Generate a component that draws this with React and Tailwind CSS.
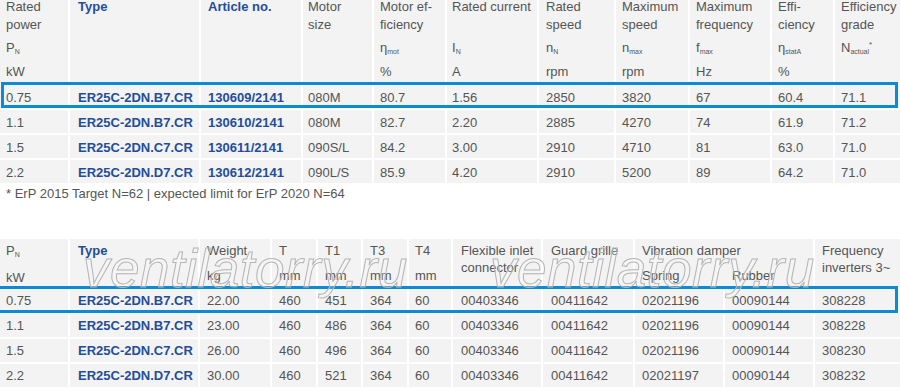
import React from 'react';

const BLUE = 'text-[#234d9c] font-bold';

const Sub = ({ children }) => <span className="relative top-[2px] text-[7px]">{children}</span>;

const topHead = [
    { t: <>Rated<br />power</>, s: <>P<Sub>N</Sub></>, u: 'kW', pl: 'pl-[6px]' },
    { t: 'Type', blue: true, pl: 'pl-[8px]' },
    { t: 'Article no.', blue: true, pl: 'pl-[7px]' },
    { t: <>Motor<br />size</>, pl: 'pl-[5px]' },
    { t: <>Motor ef-<br />ficiency</>, s: <>η<Sub>mot</Sub></>, u: '%', pl: 'pl-[6px]' },
    { t: 'Rated current', s: <>I<Sub>N</Sub></>, u: 'A', pl: 'pl-[5px]' },
    { t: <>Rated<br />speed</>, s: <>n<Sub>N</Sub></>, u: 'rpm', pl: 'pl-[7px]' },
    { t: <>Maximum<br />speed</>, s: <>n<Sub>max</Sub></>, u: 'rpm', pl: 'pl-[6px]' },
    { t: <>Maximum<br />frequency</>, s: <>f<Sub>max</Sub></>, u: 'Hz', pl: 'pl-[6px]' },
    { t: <>Effi-<br />ciency</>, s: <>η<Sub>statA</Sub></>, u: '%', pl: 'pl-[6px]' },
    { t: <>Efficiency<br />grade</>, s: <>N<Sub>actual</Sub><span className="relative -top-[5px] text-[8px]">*</span></>, pl: 'pl-[6px]' },
];

const topWidths = [68, 129, 100, 69, 71, 90, 75, 72, 80, 61, 65];

const topRows = [
    ['0.75', 'ER25C-2DN.B7.CR', '130609/2141', '080M', '80.7', '1.56', '2850', '3820', '67', '60.4', '71.1'],
    ['1.1', 'ER25C-2DN.B7.CR', '130610/2141', '080M', '82.7', '2.20', '2885', '4270', '74', '61.9', '71.2'],
    ['1.5', 'ER25C-2DN.C7.CR', '130611/2141', '090S/L', '84.2', '3.00', '2910', '4710', '81', '63.0', '71.0'],
    ['2.2', 'ER25C-2DN.D7.CR', '130612/2141', '090L/S', '85.9', '4.20', '2910', '5200', '89', '64.2', '71.0'],
];

const bottomWidths = [68, 128, 70, 44, 43, 44, 42, 88, 90, 88, 88, 85];
const bottomPads = ['pl-[6px]', 'pl-[8px]', 'pl-[7px]', 'pl-[7px]', 'pl-[7px]', 'pl-[7px]', 'pl-[6px]', 'pl-[8px]', 'pl-[8px]', 'pl-[7px]', 'pl-[7px]', 'pl-[7px]'];

const bottomRows = [
    ['0.75', 'ER25C-2DN.B7.CR', '22.00', '460', '451', '364', '60', '00403346', '00411642', '02021196', '00090144', '308228'],
    ['1.1', 'ER25C-2DN.B7.CR', '23.00', '460', '486', '364', '60', '00403346', '00411642', '02021196', '00090144', '308228'],
    ['1.5', 'ER25C-2DN.C7.CR', '26.00', '460', '496', '364', '60', '00403346', '00411642', '02021196', '00090144', '308230'],
    ['2.2', 'ER25C-2DN.D7.CR', '30.00', '460', '521', '364', '60', '00403346', '00411642', '02021197', '00090144', '308232'],
];

// watermark sits over the second table's header
const Watermark = ({ left }) => (
    <span
        className="absolute top-[242px] whitespace-nowrap text-[53px] leading-[53px] italic tracking-[0.5px] text-white/20 [-webkit-text-stroke:1px_#b4b4b4] pointer-events-none"
        style={{ left }}
    >
        ventilatorry.ru
    </span>
);

const TopTable = () => (
    <div className="relative h-[183px]">
        <table className="-mt-[2px] -ml-[2px] w-[904px] table-fixed border-separate border-spacing-[2px]">
            <colgroup>
                {topWidths.map((w, i) => (
                    <col key={i} style={{ width: w }} />
                ))}
            </colgroup>
            <thead>
                <tr>
                    {topHead.map((h, i) => (
                        <th key={i} className={`h-[83px] bg-[#f3f3f3] p-0 align-top text-left font-normal ${h.pl}`}>
                            <div className={`-mt-[2px] h-[36px] whitespace-nowrap leading-[18px] ${h.blue ? BLUE : ''}`}>{h.t}</div>
                            <div className="mt-[5px] h-[18px] whitespace-nowrap leading-[18px]">{h.s}</div>
                            <div className="mt-[6px] h-[18px] leading-[18px]">{h.u}</div>
                        </th>
                    ))}
                </tr>
            </thead>
            <tbody>
                {topRows.map((r, ri) => (
                    <tr key={ri}>
                        {r.map((c, ci) => (
                            <td key={ci} className={`bg-[#f3f3f3] p-0 align-top ${topHead[ci].pl} ${ci === 1 || ci === 2 ? BLUE : ''}`}>
                                <div className="h-[23px] pt-[1px] leading-[23px] whitespace-nowrap">{c}</div>
                            </td>
                        ))}
                    </tr>
                ))}
            </tbody>
        </table>
        <div className="absolute left-[1px] top-[84px] h-[26px] w-[897px] border-[3px] border-[#0b8ad6]" />
    </div>
);

const BottomTable = () => (
    <div className="relative h-[150px]">
        <table className="-mt-[2px] -ml-[2px] w-[904px] table-fixed border-separate border-spacing-[2px]">
            <colgroup>
                {bottomWidths.map((w, i) => (
                    <col key={i} style={{ width: w }} />
                ))}
            </colgroup>
            <thead>
                <tr>
                    {[
                        [<>P<Sub>N</Sub></>, 'kW'],
                        ['Type', null, true],
                        ['Weight', 'kg'],
                        ['T', 'mm'],
                        ['T1', 'mm'],
                        ['T3', 'mm'],
                        ['T4', 'mm'],
                        [<>Flexible inlet<br />connector</>, null],
                        ['Guard grille', null],
                    ].map(([t, u, blue], i) => (
                        <th key={i} className={`h-[48px] bg-[#f3f3f3] p-0 pt-[3px] align-top text-left font-normal ${bottomPads[i]}`}>
                            <div className={`whitespace-nowrap leading-[17px] ${blue ? BLUE : ''}`}>{t}</div>
                            {u && <div className="mt-[8px] leading-[17px]">{u}</div>}
                        </th>
                    ))}
                    <th colSpan={2} className="h-[48px] bg-[#f3f3f3] p-0 pt-[3px] align-top text-left font-normal">
                        <div className="pl-[7px] whitespace-nowrap leading-[17px]">Vibration damper</div>
                        <div className="mt-[8px] grid grid-cols-[88px_88px] gap-[2px] leading-[17px]">
                            <span className="pl-[7px]">Spring</span>
                            <span className="pl-[7px]">Rubber</span>
                        </div>
                    </th>
                    <th className="h-[48px] bg-[#f3f3f3] p-0 pt-[3px] pl-[7px] align-top text-left font-normal">
                        <div className="whitespace-nowrap leading-[17px]">Frequency<br />inverters 3~</div>
                    </th>
                </tr>
            </thead>
            <tbody>
                {bottomRows.map((r, ri) => (
                    <tr key={ri}>
                        {r.map((c, ci) => (
                            <td key={ci} className={`bg-[#f3f3f3] p-0 align-top ${bottomPads[ci]} ${ci === 1 ? BLUE : ''}`}>
                                <div className="h-[23px] leading-[23px] whitespace-nowrap">{c}</div>
                            </td>
                        ))}
                    </tr>
                ))}
            </tbody>
        </table>
        <div className="absolute -left-[6px] top-[49px] h-[27px] w-[904px] border-[3px] border-[#0b8ad6]" />
    </div>
);

export default function App() {
    return (
        <div className="relative h-[391px] w-[900px] overflow-hidden bg-white font-['Liberation_Sans',Arial,sans-serif] text-[13px] text-[#555]">
            <TopTable />
            <div className="h-[58px] pl-[6px] pt-[4px] leading-[17px]">* ErP 2015 Target N=62 | expected limit for ErP 2020 N=64</div>
            <BottomTable />
            <Watermark left={83} />
            <Watermark left={490} />
        </div>
    );
}
